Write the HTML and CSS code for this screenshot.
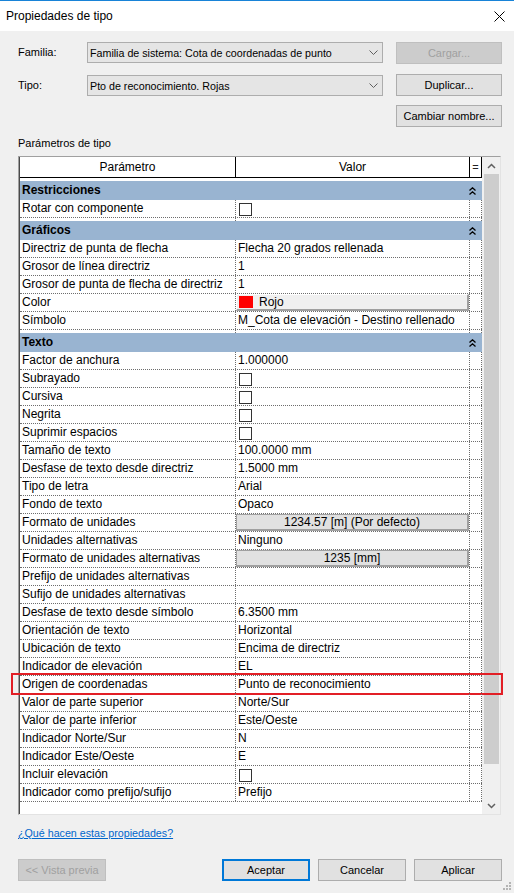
FILE: index.html
```html
<!DOCTYPE html>
<html lang="es">
<head>
<meta charset="utf-8">
<title>Propiedades de tipo</title>
<link rel="stylesheet" href="styles.css">
</head>
<body>
<div class="titlebar">
  <span class="title">Propiedades de tipo</span>
  <svg class="close" width="11" height="11" viewBox="0 0 11 11"><path d="M0.5 0.5L10.5 10.5M10.5 0.5L0.5 10.5" stroke="#000" stroke-width="1" fill="none"/></svg>
</div>
<div class="body">
  <div class="form">
    <label class="lbl">Familia:</label>
    <div class="combo"><span>Familia de sistema: Cota de coordenadas de punto</span><svg width="9" height="6" viewBox="0 0 9 6"><path d="M0.5 0.5L4.5 4.5L8.5 0.5" stroke="#606060" fill="none"/></svg></div>
    <button class="btn disabled m1">Cargar...</button>
    <label class="lbl m1">Tipo:</label>
    <div class="combo m1"><span>Pto de reconocimiento. Rojas</span><svg width="9" height="6" viewBox="0 0 9 6"><path d="M0.5 0.5L4.5 4.5L8.5 0.5" stroke="#606060" fill="none"/></svg></div>
    <button class="btn">Duplicar...</button>
    <span></span><span></span>
    <button class="btn">Cambiar nombre...</button>
  </div>
  <div class="caption">Parámetros de tipo</div>
  <div class="grid">
    <div class="table">
      <div class="hdr"><div class="c1">Parámetro</div><div class="c2">Valor</div><div class="c3">=</div></div>

      <div class="sec"><span>Restricciones</span><svg width="7" height="8" viewBox="0 0 7 8"><path d="M0.5 3.5L3.5 0.8L6.5 3.5M0.5 7.5L3.5 4.8L6.5 7.5" stroke="#000" stroke-width="1.3" fill="none"/></svg></div>
      <div class="row"><div class="c1">Rotar con componente</div><div class="c2"><span class="chk"></span></div><div class="c3"></div></div>
      <div class="gap"><div class="c1"></div><div class="c2"></div><div class="c3"></div></div>

      <div class="sec"><span>Gráficos</span><svg width="7" height="8" viewBox="0 0 7 8"><path d="M0.5 3.5L3.5 0.8L6.5 3.5M0.5 7.5L3.5 4.8L6.5 7.5" stroke="#000" stroke-width="1.3" fill="none"/></svg></div>
      <div class="row"><div class="c1">Directriz de punta de flecha</div><div class="c2">Flecha 20 grados rellenada</div><div class="c3"></div></div>
      <div class="row"><div class="c1">Grosor de línea directriz</div><div class="c2">1</div><div class="c3"></div></div>
      <div class="row"><div class="c1">Grosor de punta de flecha de directriz</div><div class="c2">1</div><div class="c3"></div></div>
      <div class="row"><div class="c1">Color</div><div class="c2 btncell"><div class="vbtn light"><span class="swatch"></span>Rojo</div></div><div class="c3"></div></div>
      <div class="row"><div class="c1">Símbolo</div><div class="c2">M_Cota de elevación - Destino rellenado</div><div class="c3"></div></div>
      <div class="gap"><div class="c1"></div><div class="c2"></div><div class="c3"></div></div>

      <div class="sec"><span>Texto</span><svg width="7" height="8" viewBox="0 0 7 8"><path d="M0.5 3.5L3.5 0.8L6.5 3.5M0.5 7.5L3.5 4.8L6.5 7.5" stroke="#000" stroke-width="1.3" fill="none"/></svg></div>
      <div class="row"><div class="c1">Factor de anchura</div><div class="c2">1.000000</div><div class="c3"></div></div>
      <div class="row"><div class="c1">Subrayado</div><div class="c2"><span class="chk"></span></div><div class="c3"></div></div>
      <div class="row"><div class="c1">Cursiva</div><div class="c2"><span class="chk"></span></div><div class="c3"></div></div>
      <div class="row"><div class="c1">Negrita</div><div class="c2"><span class="chk"></span></div><div class="c3"></div></div>
      <div class="row"><div class="c1">Suprimir espacios</div><div class="c2"><span class="chk"></span></div><div class="c3"></div></div>
      <div class="row"><div class="c1">Tamaño de texto</div><div class="c2">100.0000 mm</div><div class="c3"></div></div>
      <div class="row"><div class="c1">Desfase de texto desde directriz</div><div class="c2">1.5000 mm</div><div class="c3"></div></div>
      <div class="row"><div class="c1">Tipo de letra</div><div class="c2">Arial</div><div class="c3"></div></div>
      <div class="row"><div class="c1">Fondo de texto</div><div class="c2">Opaco</div><div class="c3"></div></div>
      <div class="row"><div class="c1">Formato de unidades</div><div class="c2 btncell"><div class="vbtn center">1234.57 [m] (Por defecto)</div></div><div class="c3"></div></div>
      <div class="row"><div class="c1">Unidades alternativas</div><div class="c2">Ninguno</div><div class="c3"></div></div>
      <div class="row"><div class="c1">Formato de unidades alternativas</div><div class="c2 btncell"><div class="vbtn center">1235 [mm]</div></div><div class="c3"></div></div>
      <div class="row"><div class="c1">Prefijo de unidades alternativas</div><div class="c2"></div><div class="c3"></div></div>
      <div class="row"><div class="c1">Sufijo de unidades alternativas</div><div class="c2"></div><div class="c3"></div></div>
      <div class="row"><div class="c1">Desfase de texto desde símbolo</div><div class="c2">6.3500 mm</div><div class="c3"></div></div>
      <div class="row"><div class="c1">Orientación de texto</div><div class="c2">Horizontal</div><div class="c3"></div></div>
      <div class="row"><div class="c1">Ubicación de texto</div><div class="c2">Encima de directriz</div><div class="c3"></div></div>
      <div class="row"><div class="c1">Indicador de elevación</div><div class="c2">EL</div><div class="c3"></div></div>
      <div class="row hl"><div class="c1">Origen de coordenadas</div><div class="c2">Punto de reconocimiento</div><div class="c3"></div></div>
      <div class="row"><div class="c1">Valor de parte superior</div><div class="c2">Norte/Sur</div><div class="c3"></div></div>
      <div class="row"><div class="c1">Valor de parte inferior</div><div class="c2">Este/Oeste</div><div class="c3"></div></div>
      <div class="row"><div class="c1">Indicador Norte/Sur</div><div class="c2">N</div><div class="c3"></div></div>
      <div class="row"><div class="c1">Indicador Este/Oeste</div><div class="c2">E</div><div class="c3"></div></div>
      <div class="row"><div class="c1">Incluir elevación</div><div class="c2"><span class="chk"></span></div><div class="c3"></div></div>
      <div class="row"><div class="c1">Indicador como prefijo/sufijo</div><div class="c2">Prefijo</div><div class="c3"></div></div>
    </div>
    <div class="scroll">
      <div class="arrow"><svg width="9" height="6" viewBox="0 0 9 6"><path d="M1 5L4.5 1.5L8 5" stroke="#606060" stroke-width="1.5" fill="none"/></svg></div>
      <div class="track"><div class="thumb"></div></div>
      <div class="arrow"><svg width="9" height="6" viewBox="0 0 9 6"><path d="M1 1L4.5 4.5L8 1" stroke="#606060" stroke-width="1.5" fill="none"/></svg></div>
    </div>
  </div>
  <a class="help" href="#">¿Qué hacen estas propiedades?</a>
  <div class="actions">
    <button class="btn wide disabled">&lt;&lt; Vista previa</button>
    <span class="spacer"></span>
    <button class="btn wide default">Aceptar</button>
    <button class="btn wide">Cancelar</button>
    <button class="btn wide">Aplicar</button>
  </div>
</div>
<svg class="grip" width="8" height="8" viewBox="0 0 8 8" fill="#b4b4b4"><rect x="6" y="0" width="2" height="2"/><rect x="3" y="3" width="2" height="2"/><rect x="6" y="3" width="2" height="2"/><rect x="0" y="6" width="2" height="2"/><rect x="3" y="6" width="2" height="2"/><rect x="6" y="6" width="2" height="2"/></svg>
</body>
</html>
```
FILE: styles.css
```css
* { box-sizing: border-box; }
html, body { margin: 0; padding: 0; }
body {
  width: 514px;
  height: 893px;
  background: #f0f0f0;
  font-family: "Liberation Sans", Arial, sans-serif;
  font-size: 12px;
  color: #000;
  overflow: hidden;
  position: relative;
}
.titlebar {
  height: 31px;
  border-top: 1px solid #1883d7;
  background: #fff;
  display: flex;
  align-items: center;
  justify-content: space-between;
  padding: 0 9px 0 6px;
}
.title { font-size: 12px; }
.close { display: block; }
.body { padding: 11px 12px 0 18px; font-size: 11px; }
.form {
  display: grid;
  grid-template-columns: 56px 296px 106px;
  grid-template-rows: 32px 31px 22px;
  column-gap: 13px;
  align-items: start;
}
.lbl { line-height: 21px; height: 21px; }
.m1 { margin-top: 1px; }
.combo {
  height: 21px;
  border: 1px solid #adadad;
  background: #e5e5e5;
  display: flex;
  align-items: center;
  justify-content: space-between;
  padding: 0 4px 0 2px;
  font-size: 10.7px;
  white-space: nowrap;
}
.combo svg { display: block; flex: none; }
.btn {
  height: 22px;
  border: 1px solid #adadad;
  background: #e1e1e1;
  font-family: inherit;
  font-size: 11px;
  color: #000;
  padding: 0;
  margin: 0;
  text-align: center;
  white-space: nowrap;
}
.btn.disabled { background: #cccccc; border-color: #bfbfbf; color: #a0a0a0; }
.btn.default { border: 2px solid #0078d7; }
.caption { margin-top: 8px; height: 16px; line-height: 16px; margin-bottom: 5px; }
.grid {
  display: flex;
  width: 483px;
  height: 659px;
  border: 1px solid;
  border-color: #a0a0a0 #e3e3e3 #e3e3e3 #a0a0a0;
  font-size: 12px;
}
.table {
  width: 463px;
  background: #fff;
  border-left: 1px solid #4a4a4a;
}
.hdr {
  display: flex;
  height: 21px;
  border-bottom: 1px solid #000;
  margin-bottom: 3px;
}
.hdr > div { text-align: center; line-height: 20px; border-right: 1px solid #000; }
.c1 { width: 216px; padding-left: 2px; }
.c2 { width: 234px; padding-left: 2px; }
.c3 { width: 12px; }
.hdr .c1, .hdr .c2 { padding-left: 0; }
.hdr .c3 { font-size: 11px; color: #222; }
.sec {
  height: 19px;
  background: #99b4d1;
  font-weight: bold;
  line-height: 19px;
  padding: 0 6px 0 2px;
  display: flex;
  align-items: center;
  justify-content: space-between;
}
.sec svg { display: block; }
.gap { display: flex; height: 3px; }
.gap > div { border-right: 1px dotted #6d6d6d; }
.row {
  display: flex;
  height: 18px;
  border-bottom: 1px dotted #6d6d6d;
  position: relative;
}
.row > div { line-height: 17px; white-space: nowrap; }
.row .c1, .row .c2, .row .c3 { border-right: 1px dotted #6d6d6d; }
.row .btncell { padding-left: 0; }
.chk {
  display: block;
  width: 13px;
  height: 13px;
  border: 1px solid #333;
  background: #fff;
  margin: 3px 0 0 1px;
}
.vbtn {
  height: 17px;
  background: #e1e1e1;
  border: 1px solid #a0a0a0;
  border-right-width: 2px;
  border-bottom-width: 2px;
  line-height: 14px;
  display: flex;
  align-items: center;
}
.vbtn.center { justify-content: center; }
.vbtn.light { background: #f0f0f0; border-top-color: #fff; border-left-color: #fff; padding-left: 2px; }
.swatch { width: 14px; height: 12px; background: #ff0000; margin-right: 6px; }
.row.hl::after {
  content: "";
  position: absolute;
  left: -9px;
  right: -21px;
  top: -3px;
  bottom: -2px;
  border: 2px solid #e21f26;
  pointer-events: none;
}
.scroll {
  width: 18px;
  background: #f0f0f0;
  display: flex;
  flex-direction: column;
}
.arrow { height: 17px; display: flex; align-items: center; justify-content: center; padding-left: 1px; }
.arrow svg { display: block; }
.track { flex: 1; padding: 0 1px 0 2px; }
.thumb { height: 590px; background: #cdcdcd; }
.help {
  display: block;
  width: max-content;
  margin-top: 11px;
  line-height: 15px;
  font-size: 10.7px;
  color: #0066cc;
  text-decoration: underline;
}
.actions { display: flex; margin-top: 18px; gap: 8px; }
.spacer { width: 100px; }
.btn.wide { width: 88px; }
.grip { position: absolute; right: 3px; bottom: 3px; }
```
